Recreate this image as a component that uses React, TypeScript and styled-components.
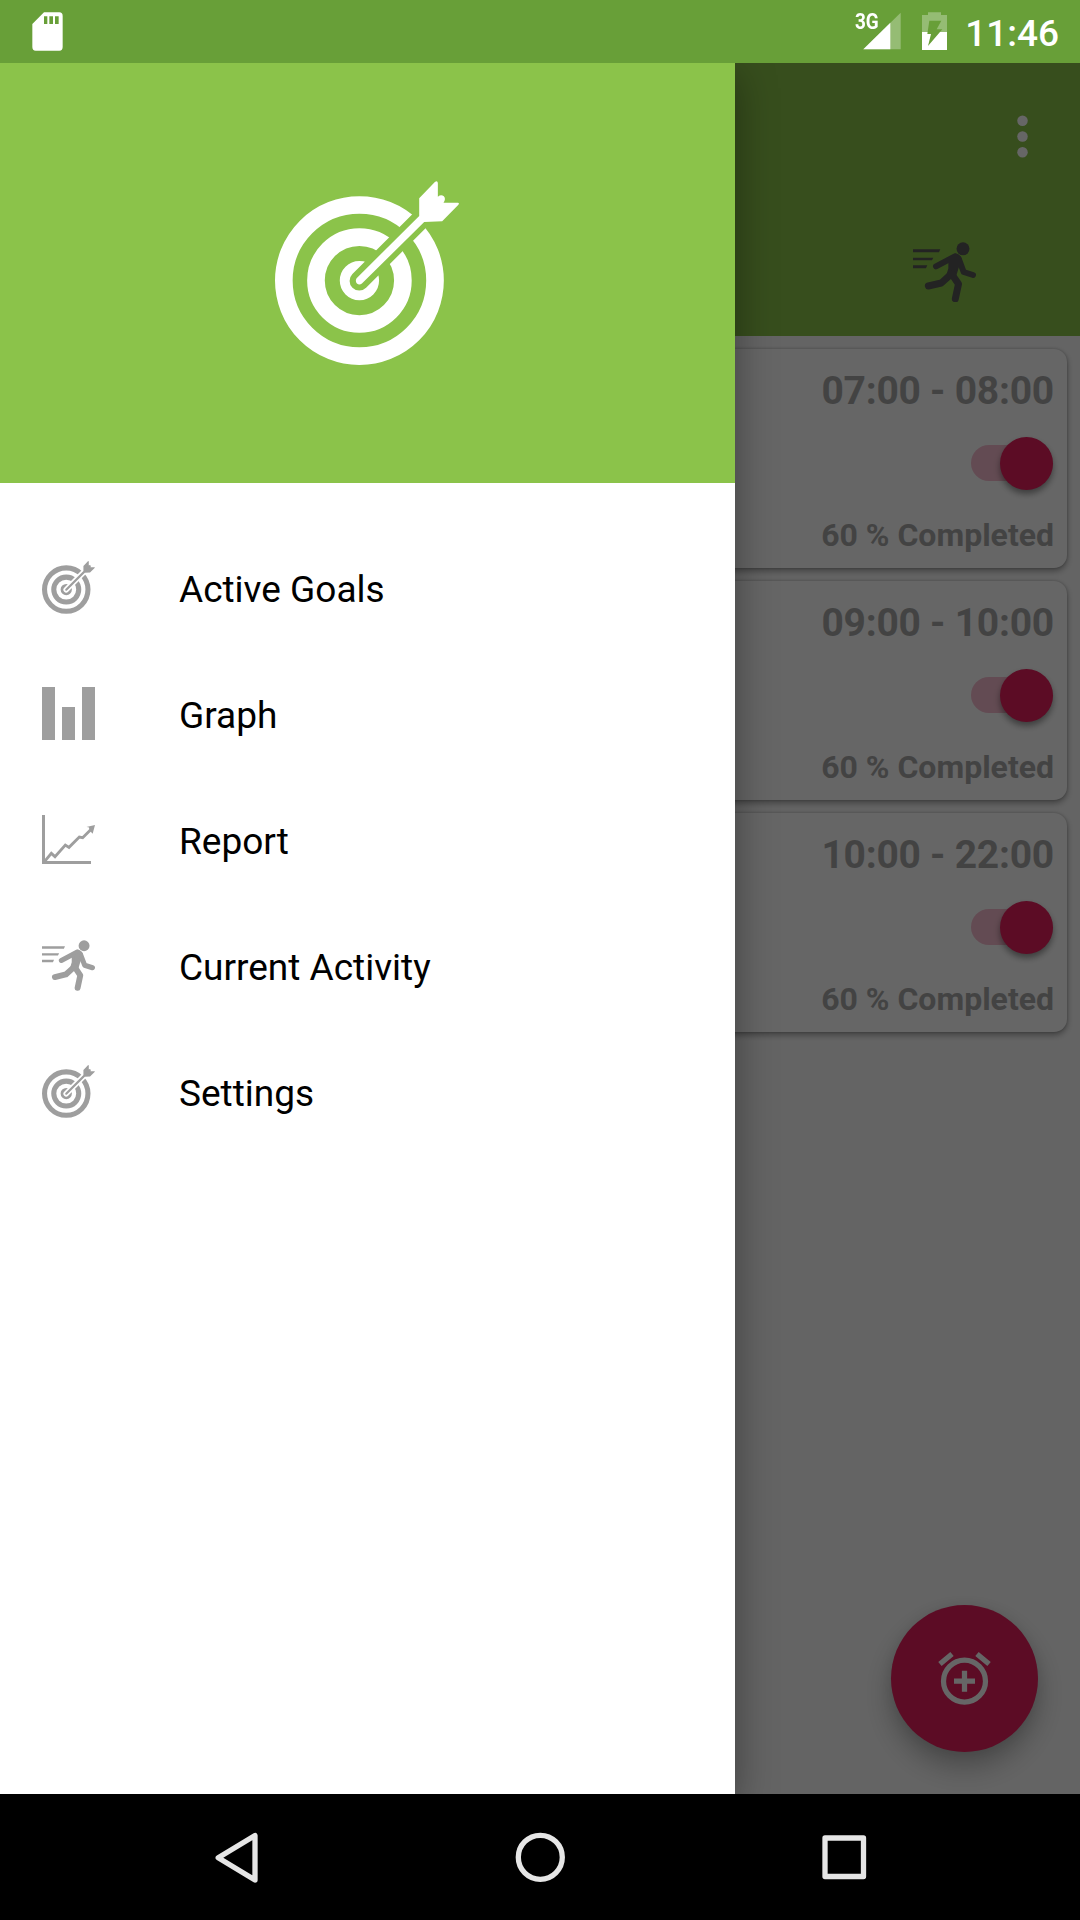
import React, { useId } from 'react';
import styled, { createGlobalStyle } from 'styled-components';

const GlobalStyle = createGlobalStyle`
  * { box-sizing: border-box; }
  body { margin: 0; background: #000; }
`;

const Screen = styled.div`
  width: 1080px;
  height: 1920px;
  display: flex;
  flex-direction: column;
  overflow: hidden;
  font-family: Roboto, 'Noto Sans', sans-serif;
`;

/* Status bar */
const StatusBar = styled.header`
  flex: none;
  height: 63px;
  padding: 0 21px 0 32px;
  background: #689f38;
  display: flex;
  align-items: center;
  justify-content: space-between;
  svg { display: block; }
`;
const StatusIcons = styled.div`
  display: flex;
  align-items: center;
`;
const SignalGroup = styled.div`
  position: relative;
  margin-right: 20px;
`;
const NetworkLabel = styled.span`
  position: absolute;
  left: -8px;
  top: 9px;
  font-size: 22px;
  line-height: 25px;
  font-weight: 700;
  color: #fff;
  transform: scaleX(0.86);
  transform-origin: left;
`;
const Clock = styled.span`
  margin-left: 17px;
  font-size: 37px;
  line-height: 63px;
  font-weight: 500;
  color: #fff;
  padding-top: 3px;
`;

/* Main page, lying under the drawer */
const Stage = styled.main`
  position: relative;
  flex: 1;
  min-height: 0;
  display: flex;
  flex-direction: column;
  background: #fafafa;
`;
const AppBar = styled.div`
  flex: none;
  height: 273px;
  background: #8bc34a;
  display: flex;
  flex-direction: column;
  align-items: flex-end;
`;
const Toolbar = styled.div`
  height: 147px;
  padding-right: 26px;
  display: flex;
  align-items: center;
  svg { display: block; }
`;
const Tab = styled.div`
  width: 270px;
  flex: 1;
  padding: 0 1px 2px 0;
  display: flex;
  align-items: center;
  justify-content: center;
  color: #585858;
`;
const GoalList = styled.div`
  display: flex;
  flex-direction: column;
  gap: 13px;
  padding: 13px;
`;
const Card = styled.section`
  height: 219px;
  padding: 19px 13px 14px;
  border-radius: 13px;
  background: #fff;
  box-shadow: 0 3px 6px rgba(0, 0, 0, 0.36), 0 0 3px rgba(0, 0, 0, 0.2);
  display: flex;
  flex-direction: column;
  align-items: flex-end;
  color: #a9a9a9;
  font-weight: 700;
`;
const Period = styled.div`
  font-size: 39px;
  line-height: 46px;
  letter-spacing: -0.24px;
`;
const Progress = styled.div`
  font-size: 32px;
  line-height: 37px;
`;
const Switch = styled.div`
  width: 82.5px;
  height: 36px;
  margin: 31px 1px 36px 0;
  border-radius: 18px;
  background: #f7bccf;
  display: flex;
  align-items: center;
  justify-content: flex-end;
`;
const Thumb = styled.div`
  flex: none;
  width: 53px;
  height: 53px;
  border-radius: 50%;
  background: #e51e5c;
  box-shadow: 0 4px 6px rgba(0, 0, 0, 0.4);
`;
const Fab = styled.button`
  position: absolute;
  right: 42px;
  bottom: 42px;
  width: 147px;
  height: 147px;
  padding: 0;
  border: 0;
  border-radius: 50%;
  background: #e51e5c;
  box-shadow: 0 15px 28px rgba(0, 0, 0, 0.27), 0 2px 14px rgba(0, 0, 0, 0.08);
  display: flex;
  align-items: center;
  justify-content: center;
`;
const Scrim = styled.div`
  position: absolute;
  inset: 0;
  background: rgba(0, 0, 0, 0.6);
`;

/* Drawer */
const Drawer = styled.nav`
  position: absolute;
  left: 0;
  top: 0;
  bottom: 0;
  width: 735px;
  background: #fff;
  box-shadow: 0 12px 38px rgba(0, 0, 0, 0.38);
  clip-path: inset(0 -60px 0 0);
  display: flex;
  flex-direction: column;
`;
const DrawerHeader = styled.div`
  flex: none;
  height: 420px;
  background: #8bc34a;
  color: #fff;
  display: flex;
  align-items: center;
  justify-content: center;
`;
const Menu = styled.ul`
  list-style: none;
  margin: 0;
  padding: 42px 0 0;
`;
const MenuItem = styled.li`
  height: 126px;
  padding: 0 42px;
  display: flex;
  align-items: center;
  gap: 84px;
  font-size: 37px;
  color: #000;
`;
const MenuLabel = styled.span`
  padding-top: 2px;
`;
const MenuIcon = styled.span`
  width: 53px;
  padding-bottom: 1px;
  display: flex;
  justify-content: center;
  color: #9e9e9e;
`;

/* System navigation */
const NavBar = styled.footer`
  flex: none;
  height: 126px;
  background: #000;
  display: flex;
  align-items: center;
  justify-content: center;
  gap: 240px;
`;

const SdCard = () => (
  <svg width="32" height="63" viewBox="96 0 96 189" fill="#fff">
    <path
      fillRule="evenodd"
      d="M132 37H178Q188 37 188 48V141Q188 152 178 152H107Q97 152 97 141V72ZM132 49V72H142V49ZM148 49V72H159V49ZM165 49V72H176V49Z"
    />
  </svg>
);
const Signal = () => (
  <svg width="38" height="63" viewBox="69 0 114 189" fill="#fff">
    <path opacity="0.3" d="M182 38V148H70Z" />
    <path d="M151 68.500V148H70Z" />
  </svg>
);
const Battery = () => (
  <svg width="27" height="63" viewBox="243 0 81 189">
    <path fill="#fff" opacity="0.3" d="M264 37H303V45H321V96H246V45H264Z" />
    <path fill="#fff" d="M246 96H321V150H246Z" />
    <path fill="#689f38" d="M268 62H304L290 88H307L264 138L273 102H262Z" />
  </svg>
);
const MoreVert = () => (
  <svg width="63" height="63" viewBox="0 0 24 24" fill="#fff">
    <circle cx="12" cy="6" r="2" />
    <circle cx="12" cy="12" r="2" />
    <circle cx="12" cy="18" r="2" />
  </svg>
);
const Target = ({ size }: { size: number }) => {
  const id = useId();
  return (
    <svg width={size} height={size} viewBox="45 32 554 554">
      <mask id={id} maskUnits="userSpaceOnUse" x="0" y="0" width="640" height="640">
        <rect width="640" height="640" fill="#fff" />
        <path d="M298 332L520 110" stroke="#000" strokeWidth="58" strokeLinecap="round" />
      </mask>
      <g mask={`url(#${id})`} fill="none" stroke="currentColor" strokeWidth="53">
        <circle cx="298.500" cy="331" r="227" />
        <circle cx="298.500" cy="331" r="130.500" />
        <circle cx="298.500" cy="331" r="29.500" strokeWidth="59" />
      </g>
      <path
        fill="currentColor"
        d="M478 137V84L525 35Q533 30 534 38V79Q544 71 552 78Q559 86 551 97H594Q600 98 595 104L547 153L493 155L306 340Q298 345 291 340Q285 332 290 324Z"
      />
    </svg>
  );
};
const Runner = ({ width }: { width: number }) => (
  <svg
    width={width}
    height={(width * 181) / 189}
    viewBox="579 545 189 181"
    fill="none"
    stroke="currentColor"
    strokeLinecap="round"
    strokeLinejoin="round"
  >
    <path fill="currentColor" stroke="none" d="M579 567H661L657 576H579ZM579 592H640L636 600H579ZM579 615H622L618 624H579Z" />
    <circle cx="729" cy="565.500" r="19.500" fill="currentColor" stroke="none" />
    <path strokeWidth="18" d="M648 618L705 588" />
    <path strokeWidth="18" d="M716 595L731 635L759 644" />
    <path fill="currentColor" strokeWidth="10" d="M690 600L704 585Q714 583 720 596L710 625L704 645H684L690 625Z" />
    <path strokeWidth="21" d="M695 640L664 668L625 677" />
    <path strokeWidth="21" d="M696 642L715.500 671L706 715.500" />
  </svg>
);
const Bars = () => (
  <svg width="53" height="53" viewBox="0 0 53 53" fill="currentColor">
    <path d="M0 0H13V53H0ZM20 20H33V53H20ZM40 0H53V53H40Z" />
  </svg>
);
const Trend = () => (
  <svg width="53" height="49" viewBox="66 45 159 147">
    <path fill="currentColor" d="M66 45H75V183H213V192H66ZM225 75L218 101L211 94L206 82L199 81Z" />
    <path fill="none" stroke="currentColor" strokeWidth="8.500" d="M74 184L94 160L105 170L136 135L147 142L178 111L188 113L215 86" />
  </svg>
);
const AlarmAdd = () => (
  <svg width="63" height="63" viewBox="0 0 24 24" fill="#fff">
    <path d="M7.880 3.390L6.600 1.860 2 5.710l1.290 1.530 4.590-3.850zM22 5.720l-4.600-3.860-1.290 1.530 4.600 3.860L22 5.720zM12 4a9 9 0 1 0 0 18 9 9 0 0 0 0-18zm0 16a7 7 0 1 1 0-14 7 7 0 0 1 0 14zm1-11h-2v3H8v2h3v3h2v-3h3v-2h-3V9z" />
  </svg>
);
const NavIcon = styled.svg`
  width: 63px;
  height: 63px;
  fill: none;
  stroke: #e6e6e6;
  stroke-width: 5.3px;
  stroke-linejoin: round;
`;

const periods = ['07:00 - 08:00', '09:00 - 10:00', '10:00 - 22:00'];
const menu = [
  { label: 'Active Goals', icon: <Target size={53} /> },
  { label: 'Graph', icon: <Bars /> },
  { label: 'Report', icon: <Trend /> },
  { label: 'Current Activity', icon: <Runner width={53} /> },
  { label: 'Settings', icon: <Target size={53} /> },
];

export default function App() {
  return (
    <Screen>
      <GlobalStyle />
      <StatusBar>
        <SdCard />
        <StatusIcons>
          <SignalGroup>
            <Signal />
            <NetworkLabel>3G</NetworkLabel>
          </SignalGroup>
          <Battery />
          <Clock>11:46</Clock>
        </StatusIcons>
      </StatusBar>
      <Stage>
        <AppBar>
          <Toolbar>
            <MoreVert />
          </Toolbar>
          <Tab>
            <Runner width={63} />
          </Tab>
        </AppBar>
        <GoalList>
          {periods.map((period) => (
            <Card key={period}>
              <Period>{period}</Period>
              <Switch>
                <Thumb />
              </Switch>
              <Progress>60 % Completed</Progress>
            </Card>
          ))}
        </GoalList>
        <Fab aria-label="Add goal">
          <AlarmAdd />
        </Fab>
        <Scrim />
        <Drawer>
          <DrawerHeader>
            <Target size={184.5} />
          </DrawerHeader>
          <Menu>
            {menu.map(({ label, icon }) => (
              <MenuItem key={label}>
                <MenuIcon>{icon}</MenuIcon>
                <MenuLabel>{label}</MenuLabel>
              </MenuItem>
            ))}
          </Menu>
        </Drawer>
      </Stage>
      <NavBar>
        <NavIcon viewBox="0 0 63 63">
          <path d="M49 9.500V54L12.200 31.700Z" />
        </NavIcon>
        <NavIcon viewBox="0 0 63 63">
          <circle cx="31.300" cy="31.300" r="22" />
        </NavIcon>
        <NavIcon viewBox="0 0 63 63">
          <rect x="13" y="12" width="38.500" height="38.500" />
        </NavIcon>
      </NavBar>
    </Screen>
  );
}
